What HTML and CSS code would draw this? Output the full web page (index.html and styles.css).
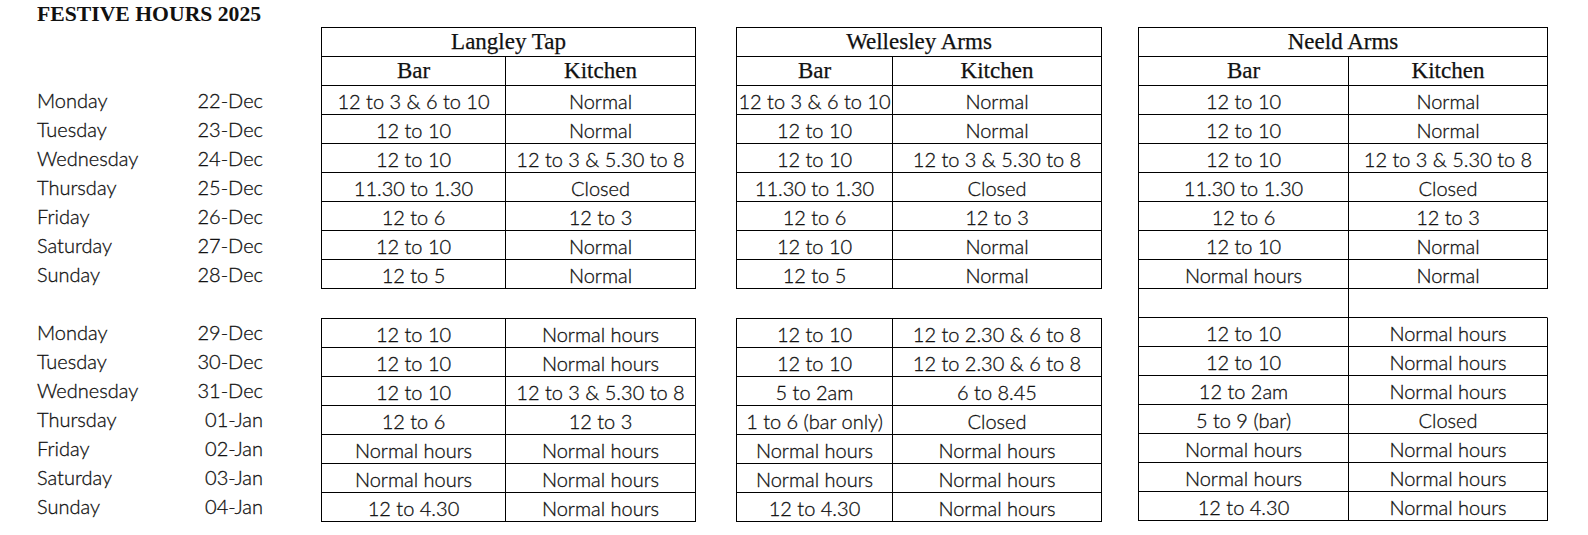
FILE: index.html
```html
<!DOCTYPE html>
<html lang="en">
<head>
<meta charset="utf-8">
<title>Festive Hours 2025</title>
<link rel="stylesheet" href="styles.css">
</head>
<body>
<div class="page">
  <h1 class="title">FESTIVE HOURS 2025</h1>
  <div class="board">
    <div class="labels">
      <div class="label-block">
        <div class="lrow"><span class="day">Monday</span><span class="date">22-Dec</span></div>
        <div class="lrow"><span class="day">Tuesday</span><span class="date">23-Dec</span></div>
        <div class="lrow"><span class="day">Wednesday</span><span class="date">24-Dec</span></div>
        <div class="lrow"><span class="day">Thursday</span><span class="date">25-Dec</span></div>
        <div class="lrow"><span class="day">Friday</span><span class="date">26-Dec</span></div>
        <div class="lrow"><span class="day">Saturday</span><span class="date">27-Dec</span></div>
        <div class="lrow"><span class="day">Sunday</span><span class="date">28-Dec</span></div>
      </div>
      <div class="label-block second">
        <div class="lrow"><span class="day">Monday</span><span class="date">29-Dec</span></div>
        <div class="lrow"><span class="day">Tuesday</span><span class="date">30-Dec</span></div>
        <div class="lrow"><span class="day">Wednesday</span><span class="date">31-Dec</span></div>
        <div class="lrow"><span class="day">Thursday</span><span class="date">01-Jan</span></div>
        <div class="lrow"><span class="day">Friday</span><span class="date">02-Jan</span></div>
        <div class="lrow"><span class="day">Saturday</span><span class="date">03-Jan</span></div>
        <div class="lrow"><span class="day">Sunday</span><span class="date">04-Jan</span></div>
      </div>
    </div>

    <div class="venue venue-langley">
      <div class="grid">
        <div class="cell head span2">Langley Tap</div>
        <div class="cell head">Bar</div><div class="cell head">Kitchen</div>
        <div class="cell">12 to 3 &amp; 6 to 10</div><div class="cell">Normal</div>
        <div class="cell">12 to 10</div><div class="cell">Normal</div>
        <div class="cell">12 to 10</div><div class="cell">12 to 3 &amp; 5.30 to 8</div>
        <div class="cell">11.30 to 1.30</div><div class="cell">Closed</div>
        <div class="cell">12 to 6</div><div class="cell">12 to 3</div>
        <div class="cell">12 to 10</div><div class="cell">Normal</div>
        <div class="cell">12 to 5</div><div class="cell">Normal</div>
      </div>
      <div class="grid second">
        <div class="cell">12 to 10</div><div class="cell">Normal hours</div>
        <div class="cell">12 to 10</div><div class="cell">Normal hours</div>
        <div class="cell">12 to 10</div><div class="cell">12 to 3 &amp; 5.30 to 8</div>
        <div class="cell">12 to 6</div><div class="cell">12 to 3</div>
        <div class="cell">Normal hours</div><div class="cell">Normal hours</div>
        <div class="cell">Normal hours</div><div class="cell">Normal hours</div>
        <div class="cell">12 to 4.30</div><div class="cell">Normal hours</div>
      </div>
    </div>

    <div class="venue venue-wellesley">
      <div class="grid">
        <div class="cell head span2">Wellesley Arms</div>
        <div class="cell head">Bar</div><div class="cell head">Kitchen</div>
        <div class="cell">12 to 3 &amp; 6 to 10</div><div class="cell">Normal</div>
        <div class="cell">12 to 10</div><div class="cell">Normal</div>
        <div class="cell">12 to 10</div><div class="cell">12 to 3 &amp; 5.30 to 8</div>
        <div class="cell">11.30 to 1.30</div><div class="cell">Closed</div>
        <div class="cell">12 to 6</div><div class="cell">12 to 3</div>
        <div class="cell">12 to 10</div><div class="cell">Normal</div>
        <div class="cell">12 to 5</div><div class="cell">Normal</div>
      </div>
      <div class="grid second">
        <div class="cell">12 to 10</div><div class="cell">12 to 2.30 &amp; 6 to 8</div>
        <div class="cell">12 to 10</div><div class="cell">12 to 2.30 &amp; 6 to 8</div>
        <div class="cell">5 to 2am</div><div class="cell">6 to 8.45</div>
        <div class="cell">1 to 6 (bar only)</div><div class="cell">Closed</div>
        <div class="cell">Normal hours</div><div class="cell">Normal hours</div>
        <div class="cell">Normal hours</div><div class="cell">Normal hours</div>
        <div class="cell">12 to 4.30</div><div class="cell">Normal hours</div>
      </div>
    </div>

    <div class="venue venue-neeld">
      <div class="grid">
        <div class="cell head span2">Neeld Arms</div>
        <div class="cell head">Bar</div><div class="cell head">Kitchen</div>
        <div class="cell">12 to 10</div><div class="cell">Normal</div>
        <div class="cell">12 to 10</div><div class="cell">Normal</div>
        <div class="cell">12 to 10</div><div class="cell">12 to 3 &amp; 5.30 to 8</div>
        <div class="cell">11.30 to 1.30</div><div class="cell">Closed</div>
        <div class="cell">12 to 6</div><div class="cell">12 to 3</div>
        <div class="cell">12 to 10</div><div class="cell">Normal</div>
        <div class="cell">Normal hours</div><div class="cell">Normal</div>
        <div class="cell"></div><div class="cell open-right"></div>
        <div class="cell">12 to 10</div><div class="cell">Normal hours</div>
        <div class="cell">12 to 10</div><div class="cell">Normal hours</div>
        <div class="cell">12 to 2am</div><div class="cell">Normal hours</div>
        <div class="cell">5 to 9 (bar)</div><div class="cell">Closed</div>
        <div class="cell">Normal hours</div><div class="cell">Normal hours</div>
        <div class="cell">Normal hours</div><div class="cell">Normal hours</div>
        <div class="cell">12 to 4.30</div><div class="cell">Normal hours</div>
      </div>
    </div>
  </div>
</div>
</body>
</html>
```
FILE: styles.css
```css
html, body {
  margin: 0;
  padding: 0;
  background: #ffffff;
}

.page {
  width: 1588px;
  color: #111111;
}

.title {
  margin: 0;
  height: 27px;
  padding-left: 37px;
  box-sizing: border-box;
  padding-top: 1px;
  font-family: "Liberation Serif", "Times New Roman", serif;
  font-weight: bold;
  font-size: 21.7px;
  line-height: 27px;
}

.board {
  display: flex;
  align-items: flex-start;
}

.labels {
  flex: none;
  width: 321px;
  padding-top: 59px;
  font-family: "Lato", "Liberation Sans", sans-serif;
  font-weight: 300;
  font-size: 20px;
  -webkit-text-stroke: 0.3px currentColor;
}

.label-block.second {
  margin-top: 29px;
}

.lrow {
  display: grid;
  grid-template-columns: 160px 66px;
  padding-left: 37px;
  height: 29px;
  box-sizing: border-box;
  padding-bottom: 1px;
  align-items: center;
  white-space: nowrap;
}

.date {
  text-align: right;
}

.venue {
  flex: none;
}

.venue-langley .grid { grid-template-columns: 184px 190px; }
.venue-wellesley { margin-left: 40px; }
.venue-wellesley .grid { grid-template-columns: 156px 209px; }
.venue-neeld { margin-left: 36px; }
.venue-neeld .grid { grid-template-columns: 210px 199px; }

.grid {
  display: grid;
  grid-auto-rows: 29px;
  border-left: 1px solid #000;
  border-top: 1px solid #000;
}

.grid.second {
  margin-top: 29px;
}

.cell {
  border-right: 1px solid #000;
  border-bottom: 1px solid #000;
  display: flex;
  align-items: center;
  justify-content: center;
  white-space: nowrap;
  font-family: "Lato", "Liberation Sans", sans-serif;
  font-weight: 300;
  font-size: 20px;
  -webkit-text-stroke: 0.3px currentColor;
  padding-top: 1px;
  box-sizing: border-box;
}

.cell.head {
  font-family: "Liberation Serif", "Times New Roman", serif;
  font-weight: 400;
  font-size: 23px;
  -webkit-text-stroke: 0.25px currentColor;
  padding-top: 0;
}

.cell.span2 {
  grid-column: span 2;
}

.cell.open-right {
  border-right-color: transparent;
}
```
